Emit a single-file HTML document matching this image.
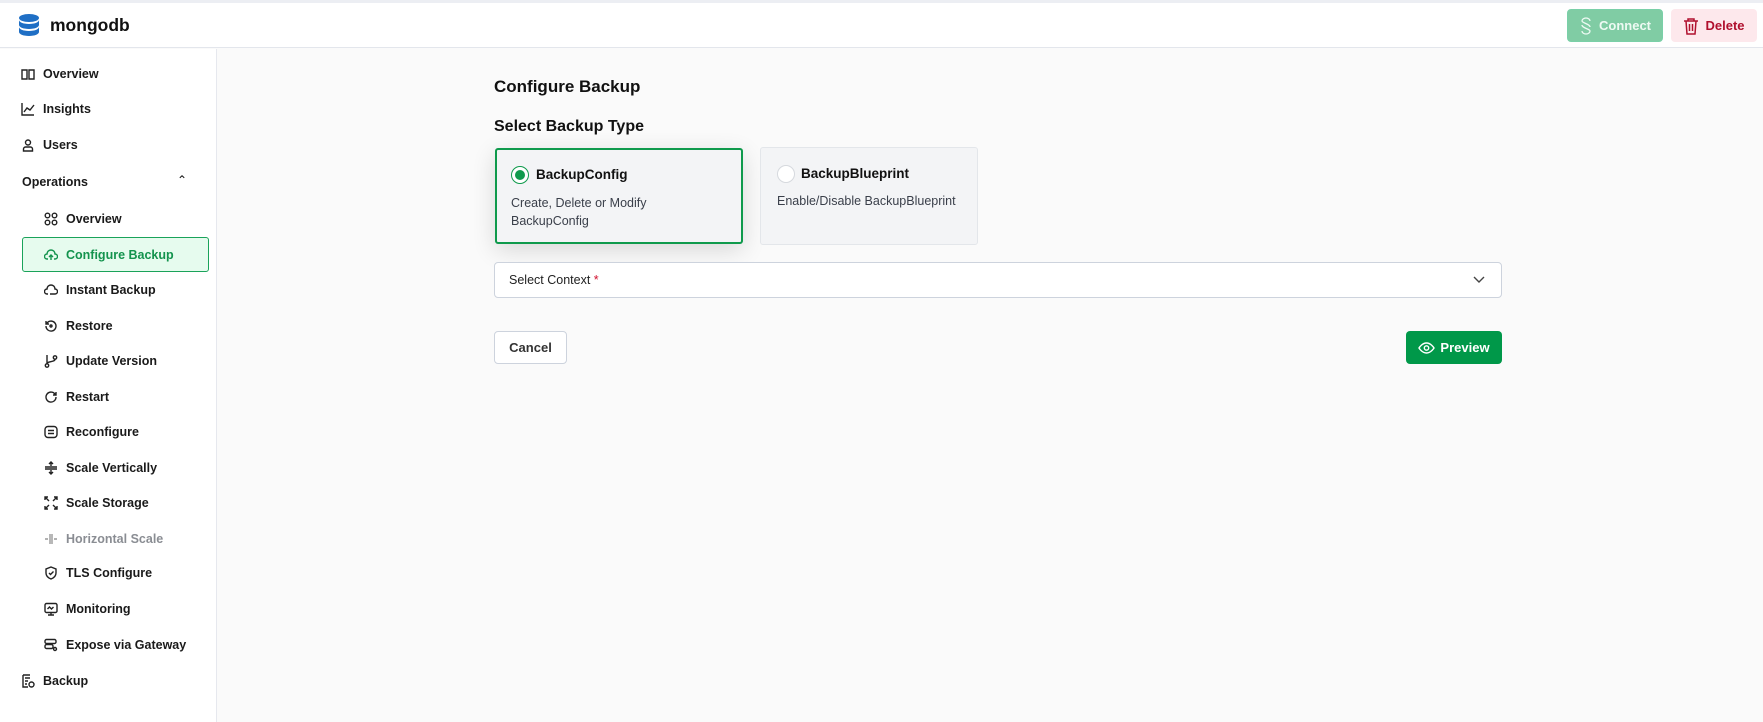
<!DOCTYPE html>
<html><head><meta charset="utf-8"><style>
*{box-sizing:border-box;margin:0;padding:0}
body{width:1763px;height:722px;overflow:hidden;font-family:"Liberation Sans",sans-serif;background:#fafafa;color:#111;position:relative}
.top{position:absolute;left:0;top:0;width:1763px;height:3px;background:#eceef3}
.hdr{position:absolute;left:0;top:3px;width:1763px;height:45px;background:#fff;border-bottom:1px solid #e3e6ec}
.side{position:absolute;left:0;top:49px;width:217px;height:673px;background:#fff;border-right:1px solid #e6e8ee}
.it{position:absolute;font-size:12.5px;font-weight:bold;color:#1a1a1a;display:flex;align-items:center;height:20px}
.it svg{position:absolute;left:-22px;width:14px;height:14px;fill:none;stroke:#222;stroke-width:1.4}
.btn{position:absolute;border-radius:4px;font-size:13px;font-weight:bold;display:flex;align-items:center;justify-content:center}
</style></head><body>
<div class="top"></div>
<div class="hdr">
 <svg style="position:absolute;left:17px;top:10px" width="26" height="26" viewBox="0 0 26 26"><ellipse cx="12" cy="5" rx="10" ry="4" fill="#1f6fc5"/><path d="M2 7v5c0 2.2 4.5 4 10 4s10-1.8 10-4V7c0 2.2-4.5 4-10 4S2 9.2 2 7z" fill="#1f6fc5"/><path d="M2 14v5c0 2.2 4.5 4 10 4s10-1.8 10-4v-5c0 2.2-4.5 4-10 4S2 16.2 2 14z" fill="#1f6fc5"/></svg>
 <div style="position:absolute;left:50px;top:12px;font-size:17.5px;font-weight:bold">mongodb</div>
 <div class="btn" style="left:1567px;top:6px;width:96px;height:33px;background:#80cca4;color:#eefaf3;border:1px solid #7ad0a8"><svg width="14" height="18" viewBox="0 0 14 18" fill="none" stroke="#eefaf3" stroke-width="1.3" style="margin-right:6px"><path d="M11 4a4 3 0 0 0-8 0c0 2 8 3 8 6M3 14a4 3 0 0 0 8 0c0-2-8-3-8-6"/></svg>Connect</div>
 <div class="btn" style="left:1671px;top:6px;width:86px;height:33px;background:#fde8ec;color:#b0102e"><svg width="16" height="18" viewBox="0 0 16 18" style="margin-right:6px" fill="none" stroke="#b0102e" stroke-width="1.5"><path d="M1 4h14M5 4V2h6v2M3 4l1 13h8l1-13M6.5 7v7M9.5 7v7"/></svg>Delete</div>
</div>
<div class="side">
 <div class="it" style="left:43px;top:15px"><svg viewBox="0 0 14 14"><path d="M1 3h5v9H1zM8 3h5v9H8z"/></svg>Overview</div>
 <div class="it" style="left:43px;top:50px"><svg viewBox="0 0 14 14"><path d="M1 1v12h12M3 10l3-4 3 2 4-5"/></svg>Insights</div>
 <div class="it" style="left:43px;top:86px"><svg viewBox="0 0 14 14"><circle cx="7" cy="4.5" r="2.5"/><path d="M2.5 13v-2a2 2 0 0 1 2-2h5a2 2 0 0 1 2 2v2z"/></svg>Users</div>
 <div class="it" style="left:22px;top:123px">Operations</div>
 <div style="position:absolute;left:177px;top:124px;font-size:12px">&#8963;</div>
 <div class="it" style="left:66px;top:160px"><svg viewBox="0 0 14 14"><circle cx="3.5" cy="3.5" r="2.3"/><circle cx="10.5" cy="3.5" r="2.3"/><circle cx="3.5" cy="10.5" r="2.3"/><circle cx="10.5" cy="10.5" r="2.3"/></svg>Overview</div>
 <div style="position:absolute;left:22px;top:188px;width:187px;height:35px;background:#e6fbee;border:1px solid #1aa35a;border-radius:3px"></div>
 <div class="it" style="left:66px;top:196px;color:#13934d"><svg viewBox="0 0 14 14" style="stroke:#13934d"><path d="M4 11H3a2.5 2.5 0 0 1 0-5 4 4 0 0 1 8 0 2.5 2.5 0 0 1 0 5h-1M7 12V7M5 9l2-2 2 2"/></svg>Configure Backup</div>
 <div class="it" style="left:66px;top:231px"><svg viewBox="0 0 14 14"><path d="M4 11H3a2.5 2.5 0 0 1 0-5 4 4 0 0 1 8 0 2.5 2.5 0 0 1 0 5H6"/></svg>Instant Backup</div>
 <div class="it" style="left:66px;top:267px"><svg viewBox="0 0 14 14"><path d="M2 7a5 5 0 1 0 1.5-3.5L2 5M2 2v3h3"/><circle cx="7" cy="7" r="1"/></svg>Restore</div>
 <div class="it" style="left:66px;top:302px"><svg viewBox="0 0 14 14"><circle cx="3" cy="11.5" r="1.7"/><circle cx="11" cy="3.5" r="1.7"/><path d="M3 1v8.8M11 5.2c0 3-8 2-8 4.5"/></svg>Update Version</div>
 <div class="it" style="left:66px;top:338px"><svg viewBox="0 0 14 14"><path d="M12 7a5 5 0 1 1-1.5-3.5L12 5M12 2v3H9"/></svg>Restart</div>
 <div class="it" style="left:66px;top:373px"><svg viewBox="0 0 14 14"><rect x="1" y="1.5" width="12" height="11" rx="3"/><path d="M4 5.5h6M4 8.5h6"/></svg>Reconfigure</div>
 <div class="it" style="left:66px;top:409px"><svg viewBox="0 0 14 14"><path d="M1 6h12M1 8h12M7 1v4M5 3l2-2 2 2M7 13V9M5 11l2 2 2-2"/></svg>Scale Vertically</div>
 <div class="it" style="left:66px;top:444px"><svg viewBox="0 0 14 14"><path d="M1 4V1h3M10 1h3v3M13 10v3h-3M4 13H1v-3M1 1l4 4M13 1L9 5M13 13L9 9M1 13l4-4"/></svg>Scale Storage</div>
 <div class="it" style="left:66px;top:480px;color:#8a8d93"><svg viewBox="0 0 14 14" style="stroke:#999"><path d="M6 2v10M8 2v10M1 7h3M10 7h3"/></svg>Horizontal Scale</div>
 <div class="it" style="left:66px;top:514px"><svg viewBox="0 0 14 14"><path d="M7 1l5 2v4c0 3-2.5 5-5 6-2.5-1-5-3-5-6V3zM5 7l1.5 1.5L9.5 5.5"/></svg>TLS Configure</div>
 <div class="it" style="left:66px;top:550px"><svg viewBox="0 0 14 14"><rect x="1" y="1.5" width="12" height="9" rx="1.5"/><path d="M7 10.5v2.5M4 13h6M3.5 7l2-2 2 2 2-2"/></svg>Monitoring</div>
 <div class="it" style="left:66px;top:586px"><svg viewBox="0 0 14 14"><rect x="1" y="1.5" width="11" height="4" rx="1.5"/><rect x="1" y="6.5" width="8" height="4" rx="1.5"/><circle cx="11" cy="11" r="1.5"/></svg>Expose via Gateway</div>
 <div class="it" style="left:43px;top:622px"><svg viewBox="0 0 14 14"><path d="M2 1h7M2 1v12h5M4 4h5M4 7h3M4 10h2"/><circle cx="10.5" cy="10.5" r="2.5"/></svg>Backup</div>
</div>
<div style="position:absolute;left:494px;top:77px;font-size:17px;font-weight:bold">Configure Backup</div>
<div style="position:absolute;left:494px;top:118px;font-size:16px;font-weight:bold">Select Backup Type</div>
<div style="position:absolute;left:495px;top:148px;width:248px;height:96px;background:#f3f4f6;border:2px solid #0f9a4c;border-radius:3px;box-shadow:0 6px 24px rgba(0,0,0,0.14)">
 <div style="position:absolute;left:14px;top:16px;width:18px;height:18px;border-radius:50%;border:1.5px solid #0f9a4c;background:#fff"><div style="position:absolute;left:2.5px;top:2.5px;width:10px;height:10px;border-radius:50%;background:#0f9a4c"></div></div>
 <div style="position:absolute;left:39px;top:17px;font-size:13.5px;font-weight:bold">BackupConfig</div>
 <div style="position:absolute;left:14px;top:44px;font-size:12.5px;color:#3a3f4a;line-height:18px">Create, Delete or Modify<br>BackupConfig</div>
</div>
<div style="position:absolute;left:760px;top:147px;width:218px;height:98px;background:#f3f4f6;border:1px solid #e3e6ea;border-radius:3px">
 <div style="position:absolute;left:16px;top:17px;width:18px;height:18px;border-radius:50%;border:1px solid #d6d9de;background:#fff"></div>
 <div style="position:absolute;left:40px;top:18px;font-size:13.5px;font-weight:bold">BackupBlueprint</div>
 <div style="position:absolute;left:16px;top:46px;font-size:12.5px;color:#3a3f4a">Enable/Disable BackupBlueprint</div>
</div>
<div style="position:absolute;left:494px;top:262px;width:1008px;height:36px;background:#fff;border:1px solid #cdd3dd;border-radius:4px">
 <div style="position:absolute;left:14px;top:10px;font-size:12.5px;color:#222">Select Context <span style="color:#d0102e">*</span></div>
 <svg style="position:absolute;right:16px;top:13px" width="12" height="8" viewBox="0 0 12 8" fill="none" stroke="#444" stroke-width="1.4"><path d="M1 1l5 5 5-5"/></svg>
</div>
<div class="btn" style="left:494px;top:331px;width:73px;height:33px;background:#fff;border:1px solid #cdd3dd;color:#333">Cancel</div>
<div class="btn" style="left:1406px;top:331px;width:96px;height:33px;background:#009849;color:#fff"><svg width="17" height="12" viewBox="0 0 17 12" fill="none" stroke="#fff" stroke-width="1.4" style="margin-right:5px"><path d="M1 6s3-5 7.5-5S16 6 16 6s-3 5-7.5 5S1 6 1 6z"/><circle cx="8.5" cy="6" r="2.2"/></svg>Preview</div>
</body></html>
